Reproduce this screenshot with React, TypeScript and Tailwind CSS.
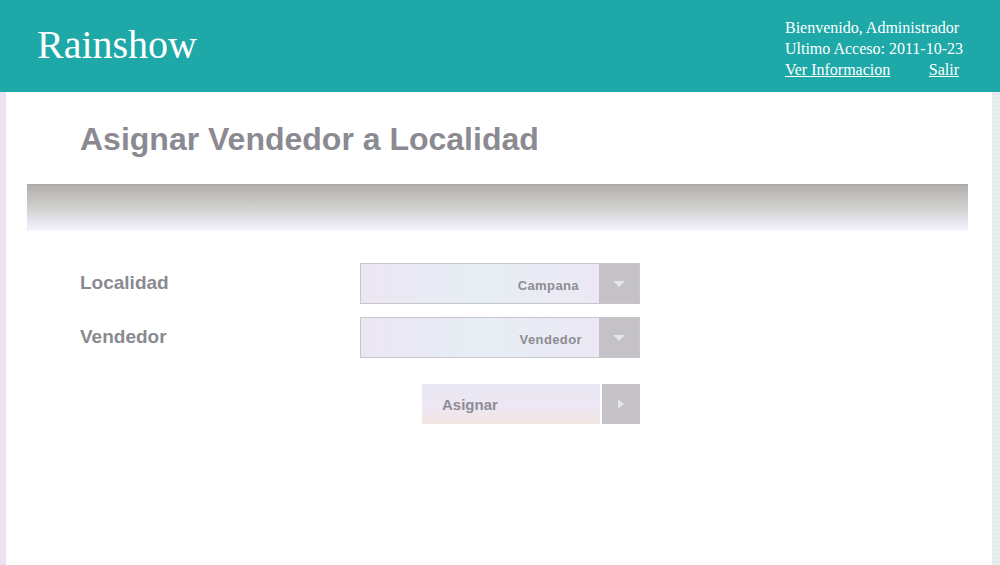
export default function App() {
  return (
    <div className="relative h-[565px] w-[1000px] overflow-hidden bg-white">
      <header className="flex h-[92px] items-start justify-between bg-[#1ea8a8] pl-[37px] pr-[37px]">
        <h1 className="mt-[21px] font-['Liberation_Serif',serif] text-[40px] leading-[48px] text-white">Rainshow</h1>
        <div className="mt-[17px] font-['Liberation_Serif',serif] text-[16px] leading-[21px] text-white">
          <div>Bienvenido, Administrador</div>
          <div>Ultimo Acceso: 2011-10-23</div>
          <div className="flex justify-between pr-[4px]">
            <a className="underline">Ver Informacion</a>
            <a className="underline">Salir</a>
          </div>
        </div>
      </header>

      <div className="flex">
        <main className="flex-1 pl-[27px] pr-[32px]">
          <h2 className="ml-[53px] mt-[29px] font-['Liberation_Sans',sans-serif] text-[32px] font-bold leading-[36px] text-[#8b8a92]">
            Asignar Vendedor a Localidad
          </h2>

          <div className="mt-[27px] h-[47px] border-t border-[#a8a8a8] bg-[linear-gradient(180deg,#b3aeac_0%,#cdcdcb_45%,#e7e5ee_80%,#f6f4fa_100%)]" />

          <div className="ml-[53px] mt-[32px] flex flex-col gap-[13px]">
            <Row label="Localidad" value="Campana" pad="pr-[20px]" />
            <Row label="Vendedor" value="Vendedor" pad="pr-[17px]" />
          </div>

          <div className="ml-[395px] mt-[26px] flex h-[40px] w-[218px]">
            <div className="flex flex-1 items-center bg-[linear-gradient(180deg,#e9e8f2_0%,#ede7f3_60%,#f2e6e2_100%)] pl-[20px] pt-[2px] font-['Liberation_Sans',sans-serif] text-[15px] font-bold text-[#8e8c94]">
              Asignar
            </div>
            <div className="ml-[2px] flex w-[38px] items-center justify-center bg-[#c4c2c6]">
              <svg width="6" height="10" viewBox="0 0 6 10">
                <path d="M0 0 L6 5 L0 10 Z" fill="#e6e4ee" />
              </svg>
            </div>
          </div>
        </main>
      </div>
      <div className="absolute bottom-0 left-0 top-[92px] w-[6px] bg-[repeating-linear-gradient(0deg,#f4dcef_0px,#f4dcef_2px,#e3e6f4_2px,#e3e6f4_4px)]" />
      <div className="absolute bottom-0 right-0 top-[92px] w-[8px] bg-[repeating-linear-gradient(0deg,#e2f4e4_0px,#e2f4e4_2px,#e6e6f6_2px,#e6e6f6_4px)]" />
    </div>
  );
}

function Row({ label, value, pad }: { label: string; value: string; pad: string }) {
  return (
    <div className="flex h-[41px] items-center">
      <div className="w-[280px] font-['Liberation_Sans',sans-serif] text-[19px] font-bold text-[#8b8a92]">{label}</div>
      <div className="flex h-[41px] w-[280px] border border-[#c8c6cc]">
        <div
          className={`flex flex-1 items-center justify-end bg-[linear-gradient(90deg,#ece6f3_0%,#e6eef4_50%,#ece8f4_100%)] ${pad} pt-[4px] font-['Liberation_Sans',sans-serif] text-[13px] font-bold tracking-[0.4px] text-[#8e8c94]`}
        >
          {value}
        </div>
        <div className="flex w-[40px] items-center justify-center bg-[#c4c2c6]">
          <svg width="12" height="6" viewBox="0 0 12 6">
            <path d="M0 0 L12 0 L6 6 Z" fill="#e6e4ee" />
          </svg>
        </div>
      </div>
    </div>
  );
}
